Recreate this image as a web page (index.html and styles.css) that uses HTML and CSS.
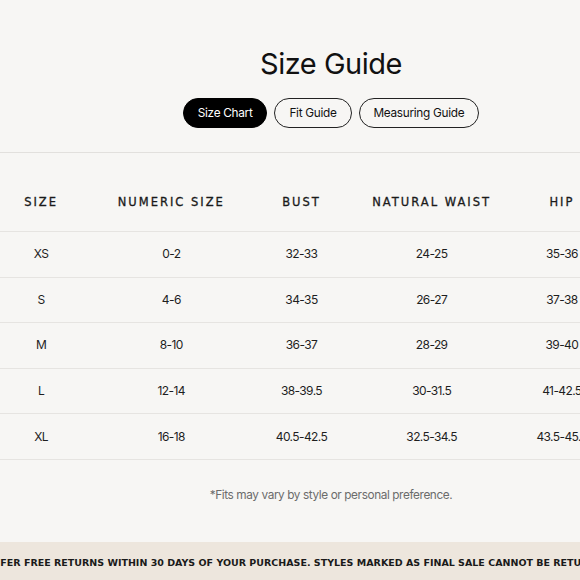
FILE: index.html
```html
<!DOCTYPE html>
<html lang="en">
<head>
<meta charset="utf-8">
<title>Size Guide</title>
<link rel="stylesheet" href="styles.css">
</head>
<body>
<div class="page">
  <header class="head">
    <h1 class="title">Size Guide</h1>
    <nav class="tabs">
      <button class="tab tab-active">Size Chart</button>
      <button class="tab">Fit Guide</button>
      <button class="tab">Measuring Guide</button>
    </nav>
  </header>
  <section class="chart">
    <div class="table-wrap">
      <table class="sizes">
        <thead>
          <tr><th>Size</th><th>Numeric Size</th><th>Bust</th><th>Natural Waist</th><th>Hip</th></tr>
        </thead>
        <tbody>
          <tr><td>XS</td><td>0-2</td><td>32-33</td><td>24-25</td><td>35-36</td></tr>
          <tr><td>S</td><td>4-6</td><td>34-35</td><td>26-27</td><td>37-38</td></tr>
          <tr><td>M</td><td>8-10</td><td>36-37</td><td>28-29</td><td>39-40</td></tr>
          <tr><td>L</td><td>12-14</td><td>38-39.5</td><td>30-31.5</td><td>41-42.5</td></tr>
          <tr><td>XL</td><td>16-18</td><td>40.5-42.5</td><td>32.5-34.5</td><td>43.5-45.5</td></tr>
        </tbody>
      </table>
    </div>
    <p class="note">*Fits may vary by style or personal preference.</p>
  </section>
</div>
<div class="banner"><span>We offer free returns within 30 days of your purchase. Styles marked as final sale cannot be returned.</span></div>
</body>
</html>
```
FILE: styles.css
```css
html, body {
  margin: 0;
  padding: 0;
  background: #f7f6f4;
  overflow: hidden;
}
body {
  width: 580px;
  font-family: "Inter", "Noto Sans", sans-serif;
  color: #1c1c1c;
}
.page {
  width: 662px;
}
.head {
  display: flex;
  flex-direction: column;
  align-items: center;
  padding-top: 44px;
}
.title {
  margin: 0;
  font-size: 29px;
  line-height: 40px;
  font-weight: 400;
  letter-spacing: -0.5px;
  color: #111;
}
.tabs {
  display: flex;
  gap: 7px;
  margin-top: 14px;
  padding-bottom: 24px;
}
.tab {
  height: 30px;
  padding: 0 14px;
  border: 1px solid #222;
  border-radius: 15px;
  background: transparent;
  font-family: "Inter", "Noto Sans", sans-serif;
  font-size: 11.8px;
  letter-spacing: -0.3px;
  color: #111;
}
.tab-active {
  background: #000;
  border-color: #000;
  color: #fff;
}
.chart {
  border-top: 1px solid #e2e0dd;
}
.table-wrap {
  margin-left: -24px;
  padding-top: 21px;
}
.sizes {
  border-collapse: collapse;
  table-layout: fixed;
  width: 651px;
}
.sizes th {
  width: 130px;
  padding: 20px 0 21px;
  font-family: "DejaVu Sans", sans-serif;
  font-size: 11.5px;
  line-height: 16px;
  font-weight: 400;
  letter-spacing: 2px;
  text-transform: uppercase;
  color: #1a1a1a;
  -webkit-text-stroke: 0.3px #1a1a1a;
  border-bottom: 1px solid #e6e4e1;
}
.sizes td {
  height: 44.6px;
  padding: 0;
  text-align: center;
  vertical-align: middle;
  font-size: 12px;
  line-height: 16px;
  letter-spacing: -0.6px;
  color: #1e1e1e;
  border-bottom: 1px solid #e6e4e1;
}
.note {
  margin: 27px 0 0;
  text-align: center;
  font-size: 11.8px;
  line-height: 16px;
  letter-spacing: -0.4px;
  color: #6b6b6b;
  padding-bottom: 39px;
}
.banner {
  background: #ede6dd;
  display: flex;
  justify-content: center;
  padding: 15px 0 20px;
  overflow: hidden;
}
.banner span {
  white-space: nowrap;
  flex: none;
  font-family: "DejaVu Sans", sans-serif;
  font-size: 9.5px;
  line-height: 12px;
  font-weight: 700;
  letter-spacing: 0;
  text-transform: uppercase;
  color: #1a1a1a;
}
```
